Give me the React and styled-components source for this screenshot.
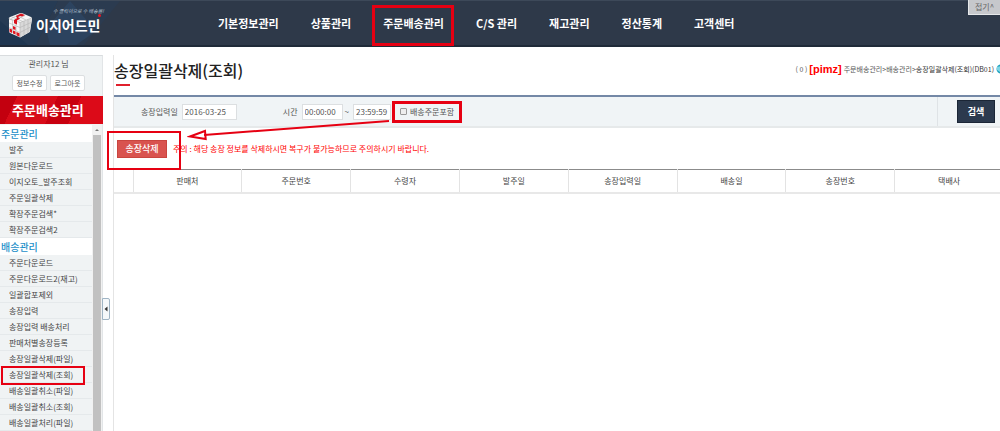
import React from 'react';
import styled, { createGlobalStyle } from 'styled-components';

const GlobalStyle = createGlobalStyle`
  * { box-sizing: border-box; }
  body {
    margin: 0;
    overflow: hidden;
    background: #fff;
    color: #555;
    font-family: "Noto Sans CJK KR", "Noto Sans", sans-serif;
    font-size: 8px;
  }
  button, input { font: inherit; color: inherit; }
  a { color: inherit; text-decoration: none; }
`;

const Page = styled.div`
  display: flex;
  flex-direction: column;
  height: 100vh;
`;

const Header = styled.header`
  position: relative;
  display: flex;
  align-items: center;
  flex: none;
  height: 47px;
  background: #2e3949;
  border-top: 1px solid #3d4959;
  border-bottom: 2px solid #1f2a38;
`;

const HeaderArt = styled.svg`
  position: absolute;
  left: 0;
  top: 0;
  width: 120px;
  height: 44px;
`;

const Brand = styled.a`
  position: relative;
  display: flex;
  align-items: center;
  gap: 3px;
  width: 218px;
  padding: 4px 0 0 7px;
  color: #fff;
`;

const BrandText = styled.span`
  position: relative;
  display: flex;
  flex-direction: column;
  padding-bottom: 8px;
`;

const Tagline = styled.small`
  padding-left: 17px;
  font-size: 5px;
  line-height: 8px;
  font-style: italic;
  color: #b9c4d3;
`;

const BrandName = styled.strong`
  font-size: 14px;
  line-height: 20px;
  font-weight: 700;
`;

const BrandDot = styled.i`
  position: absolute;
  top: 7px;
  left: 62px;
  width: 3px;
  height: 3px;
  border-radius: 50%;
  background: #f01420;
`;

const Nav = styled.nav`
  display: flex;
  gap: 32px;
`;

const NavLink = styled.a`
  position: relative;
  color: #fff;
  font-size: 11px;
  line-height: 16px;
  font-weight: 700;
  white-space: nowrap;
`;

const Marker = styled.span`
  position: absolute;
  inset: ${(p) => p.$inset};
  border: ${(p) => p.$weight || 2}px solid #e60012;
  pointer-events: none;
`;

const FoldButton = styled.button`
  position: absolute;
  top: -1px;
  right: 0;
  width: 32px;
  height: 15px;
  padding: 0;
  border: 0;
  border-left: 1px solid #e6e8ea;
  border-bottom: 1px solid #e6e8ea;
  background: #c6c8cc;
  color: #666;
  font-size: 8px;
  line-height: 12px;
`;

const Body = styled.div`
  display: flex;
  flex: 1;
  min-height: 0;
  padding-top: 8px;
`;

const Sidebar = styled.aside`
  position: relative;
  display: flex;
  flex-direction: column;
  flex: none;
  width: 103px;
  background: #f0f3f4;
  border-top: 1px solid #d9dcde;
  border-right: 1px solid #e2e5e7;
`;

const UserBox = styled.div`
  display: flex;
  flex-direction: column;
  align-items: center;
  gap: 5px;
  flex: none;
  height: 40px;
  padding-top: 2px;
  padding-right: 5px;
  line-height: 12px;
`;

const UserActions = styled.div`
  display: flex;
  gap: 3px;
`;

const SmallButton = styled.button`
  width: 35px;
  height: 16px;
  padding: 0;
  border: 1px solid #dcdfe1;
  border-radius: 2px;
  background: #fff;
  font-size: 7px;
  line-height: 12px;
`;

const SectionTitle = styled.h2`
  flex: none;
  margin: 0 -1px 0 0;
  padding-left: 12px;
  height: 28px;
  background: linear-gradient(115deg, #c3000f 0 15%, #d80b18 15% 50%, #c8000f 50% 70%, #dc0a18 70%);
  color: #fff;
  font-size: 13px;
  line-height: 28px;
  font-weight: 700;
`;

const MenuArea = styled.div`
  display: flex;
  flex: 1;
  min-height: 0;
  padding-top: 1px;
`;

const Menu = styled.nav`
  flex: 1;
  overflow: hidden;
`;

const MenuHeading = styled.h3`
  margin: 0;
  padding-left: 1px;
  background: #fff;
  color: #1d8fc9;
  font-size: 10px;
  line-height: 17px;
  font-weight: 500;
`;

const MenuList = styled.ul`
  margin: 0;
  padding: 0;
  list-style: none;
`;

const MenuItem = styled.li`
  position: relative;
  height: 16px;
  padding-left: 9px;
  border-bottom: 1px solid #e5e9eb;
  color: #444;
  line-height: 15px;
  white-space: nowrap;
`;

const ScrollTrack = styled.div`
  display: flex;
  flex-direction: column;
  align-items: center;
  width: 10px;
  background: #f1f1f1;
`;

const ScrollThumb = styled.div`
  flex: 1;
  width: 8px;
  background: #c1c1c1;
`;

const Splitter = styled.button`
  position: absolute;
  left: 102px;
  top: 242px;
  width: 8px;
  height: 22px;
  padding: 0;
  display: grid;
  place-items: center;
  border: 1px solid #9fb4c4;
  border-radius: 0 2px 2px 0;
  background: #f5f8fa;
`;

const Main = styled.main`
  flex: 1;
  min-width: 0;
  margin-left: 10px;
  border-left: 1px solid #e4e4e4;
`;

const TitleRow = styled.div`
  display: flex;
  justify-content: space-between;
  height: 40px;
`;

const PageTitle = styled.h1`
  margin: 0;
  padding-top: 3px;
  color: #222;
  font-size: 16px;
  line-height: 24px;
  font-weight: 500;

  &::after {
    content: "";
    display: block;
    width: 14px;
    height: 2px;
    margin: 2px 0 0 2px;
    background: #e0202c;
  }
`;

const Breadcrumb = styled.div`
  display: flex;
  align-items: center;
  height: 28px;
  gap: 2px;
  margin-right: -6px;
  font-size: 7px;
  white-space: nowrap;
`;

const Vendor = styled.strong`
  color: #f00;
  font-family: "Liberation Sans", sans-serif;
  font-size: 11px;
`;

const Current = styled.span`
  color: #333;
`;

const SearchForm = styled.form`
  position: relative;
  display: flex;
  align-items: center;
  height: 33px;
  border-top: 2px solid #7488a6;
  border-bottom: 2px solid #e6e9ea;
  background: #f0f4f6;
`;

const Field = styled.label`
  display: flex;
  align-items: center;
  gap: 4px;
  margin-left: ${(p) => p.$space}px;
`;

const TextInput = styled.input`
  width: ${(p) => p.$width}px;
  height: 16px;
  padding: 0 2px;
  border: 1px solid #dcdfe1;
  background: #fff;
  color: #555;
`;

const CheckField = styled.label`
  position: relative;
  display: flex;
  align-items: center;
  gap: 3px;
  margin-left: 6px;
  padding: 0 3px;
`;

const CheckBox = styled.input`
  appearance: none;
  width: 7px;
  height: 7px;
  margin: 0;
  border: 1px solid #999;
  border-radius: 1px;
  background: #eee;
`;

const SubmitCell = styled.div`
  display: flex;
  align-items: center;
  justify-content: flex-end;
  width: 63px;
  height: 100%;
  margin-left: auto;
  padding-right: 5px;
  border-left: 1px solid #dfe3e6;
`;

const SubmitButton = styled.button`
  width: 38px;
  height: 23px;
  padding: 0;
  border: 1px solid #1b2636;
  background: #2c3a4e;
  color: #fff;
  font-size: 9px;
  font-weight: 700;
`;

const Arrow = styled.svg`
  position: absolute;
  left: 73px;
  top: 18px;
  width: 206px;
  height: 30px;
  pointer-events: none;
  z-index: 1;
`;

const Toolbar = styled.div`
  display: flex;
  align-items: center;
  gap: 6px;
  height: 41px;
  padding-left: 3px;
`;

const ButtonWrap = styled.span`
  position: relative;
  display: flex;
`;

const DeleteButton = styled.button`
  width: 50px;
  height: 18px;
  padding: 0;
  border: 1px solid #c9453f;
  background: #d9534f;
  color: #fff;
  font-size: 9px;
  line-height: 16px;
  font-weight: 500;
`;

const Warning = styled.p`
  margin: 0;
  color: #f00;
  font-size: 8px;
`;

const Table = styled.table`
  width: calc(100% + 4px);
  table-layout: fixed;
  border-collapse: collapse;
  border-top: 1px solid #8b8b8b;
`;

const Th = styled.th`
  width: ${(p) => p.$width || 'auto'};
  height: 23px;
  padding: 0;
  border-right: 1px solid #e3e3e3;
  border-bottom: 2px solid #e8e8e8;
  color: #444;
  font-weight: 400;
`;

const navItems = ['기본정보관리', '상품관리', '주문배송관리', 'C/S 관리', '재고관리', '정산통계', '고객센터'];

const menu = [
  { title: '주문관리', items: ['발주', '원본다운로드', '이지오토_발주조회', '주문일괄삭제', '확장주문검색*', '확장주문검색2'] },
  {
    title: '배송관리',
    items: ['주문다운로드', '주문다운로드2(재고)', '일괄합포제외', '송장입력', '송장입력 배송처리', '판매처별송장등록', '송장일괄삭제(파일)', '송장일괄삭제(조회)', '배송일괄취소(파일)', '배송일괄취소(조회)', '배송일괄처리(파일)'],
  },
];

const columns = ['판매처', '주문번호', '수령자', '발주일', '송장입력일', '배송일', '송장번호', '택배사'];

function CubeLogo() {
  return (
    <svg width="26" height="26" viewBox="0 0 26 26" aria-hidden="true">
      <path d="M2 7Q1 6 3 5L12 1.500q2-.8 4 0L24 5q1 .5 1 2l-2 12q0 1-1 1.500L14 25q-1 .6-2 0l-9-4q-1-.5-1-2z" fill="#f7f7f7" />
      <path d="M13 10.500L25 6l-2 13.500L13 25.500z" fill="#d9d9d9" />
      <path d="M5 8L2 7M9 3l10 5M5 5l11 4.500M13 10.500L2 6.500M13 10.500L24.500 6M5.500 8v13M9 9v14M13 10.500v15M17 9v14M21 7.500V21M2 11l11 4.500 11-5M2 15.500L13 20.500l10.500-5.500M8 8l10-4.500M4 6.500L14 2" fill="none" stroke="#b4b4b4" strokeWidth=".6" />
      <path d="M9 4l5-2.500 4 1.500-3 1.500-2-.5-2 1 2 1.500-3 2v4l-3-1.200V8l3-1.800z" fill="#d8141f" />
      <path d="M2.500 16.500l2.500 1v3.500l-2.500-1.200zM6 18.500l2.500 1v3L6 21.500zM9.500 20l3 1.200v3.500l-3-1.500zM6 14l2.500 1v3L6 17z" fill="#e0141f" />
    </svg>
  );
}

export default function App() {
  return (
    <>
      <GlobalStyle />
      <Page>
        <Header>
          <HeaderArt viewBox="0 0 120 44" aria-hidden="true">
            <path d="M0 0h58L36 44H0z" fill="#263b54" />
            <path d="M58 0h62L84 44H36z" fill="#2b3b50" />
            <path d="M46 28l24-28 26 30-20 14H50z" fill="#2d4a69" opacity=".6" />
            <path d="M0 20l28 24H0z" fill="#1f3650" />
          </HeaderArt>
          <Brand href="#">
            <CubeLogo />
            <BrandText>
              <Tagline>수 클릭이으로 수 배송을!</Tagline>
              <BrandName>이지어드민</BrandName>
              <BrandDot />
            </BrandText>
          </Brand>
          <Nav>
            {navItems.map((name) => (
              <NavLink href="#" key={name}>
                {name}
                {name === '주문배송관리' && <Marker $inset="-10px -10px -15px -11px" $weight={3} />}
              </NavLink>
            ))}
          </Nav>
          <FoldButton>접기^</FoldButton>
        </Header>
        <Body>
          <Sidebar>
            <UserBox>
              <span>관리자12 님</span>
              <UserActions>
                <SmallButton>정보수정</SmallButton>
                <SmallButton>로그아웃</SmallButton>
              </UserActions>
            </UserBox>
            <SectionTitle>주문배송관리</SectionTitle>
            <MenuArea>
              <Menu>
                {menu.map((group) => (
                  <React.Fragment key={group.title}>
                    <MenuHeading>{group.title}</MenuHeading>
                    <MenuList>
                      {group.items.map((item) => (
                        <MenuItem key={item}>
                          <a href="#">{item}</a>
                          {item === '송장일괄삭제(조회)' && <Marker $inset="-1px 7px -3px 1px" />}
                        </MenuItem>
                      ))}
                    </MenuList>
                  </React.Fragment>
                ))}
              </Menu>
              <ScrollTrack>
                <svg width="8" height="10" viewBox="0 0 8 10" aria-hidden="true">
                  <path d="M2 6l2-2 2 2z" fill="#777" />
                </svg>
                <ScrollThumb />
              </ScrollTrack>
            </MenuArea>
            <Splitter aria-label="메뉴 접기">
              <svg width="4" height="6" viewBox="0 0 4 6" aria-hidden="true">
                <path d="M3.500 .5v5L.5 3z" fill="#333" />
              </svg>
            </Splitter>
          </Sidebar>
          <Main>
            <TitleRow>
              <PageTitle>송장일괄삭제(조회)</PageTitle>
              <Breadcrumb>
                <span>( 0 )</span>
                <Vendor>[pimz]</Vendor>
                <span>
                  주문배송관리&gt;배송관리&gt;<Current>송장일괄삭제(조회)(DB01)</Current>
                </span>
                <svg width="10" height="10" viewBox="0 0 10 10" aria-hidden="true">
                  <circle cx="5" cy="5" r="4.500" fill="#1aa0bd" />
                  <path d="M1 3l4-1 2 3-3 3-3-2z" fill="#7fd6e6" />
                </svg>
              </Breadcrumb>
            </TitleRow>
            <SearchForm onSubmit={(e) => e.preventDefault()}>
              <Field $space={27}>
                송장입력일
                <TextInput $width={55} defaultValue="2016-03-25" />
              </Field>
              <Field $space={46}>
                시간
                <TextInput $width={41} defaultValue="00:00:00" />
              </Field>
              <Field $space={2}>
                ~
                <TextInput $width={38} aria-label="종료 시간" defaultValue="23:59:59" />
              </Field>
              <CheckField>
                <CheckBox type="checkbox" />
                배송주문포함
                <Marker $inset="-5px -5px -6px" $weight={3} />
              </CheckField>
              <SubmitCell>
                <SubmitButton>검색</SubmitButton>
              </SubmitCell>
              <Arrow viewBox="0 0 206 30" aria-hidden="true">
                <path d="M202 6L17 20" stroke="#e60012" strokeWidth="2" />
                <path d="M3 21.500l15-5.500.7 8z" fill="none" stroke="#e60012" strokeWidth="2" />
              </Arrow>
            </SearchForm>
            <Toolbar>
              <ButtonWrap>
                <DeleteButton>송장삭제</DeleteButton>
                <Marker $inset="-9px -14px -12px -10px" />
              </ButtonWrap>
              <Warning>주의 : 해당 송장 정보를 삭제하시면 복구가 불가능하므로 주의하시기 바랍니다.</Warning>
            </Toolbar>
            <Table>
              <thead>
                <tr>
                  <Th $width="19px" aria-label="선택" />
                  {columns.map((name) => (
                    <Th key={name}>{name}</Th>
                  ))}
                </tr>
              </thead>
            </Table>
          </Main>
        </Body>
      </Page>
    </>
  );
}
